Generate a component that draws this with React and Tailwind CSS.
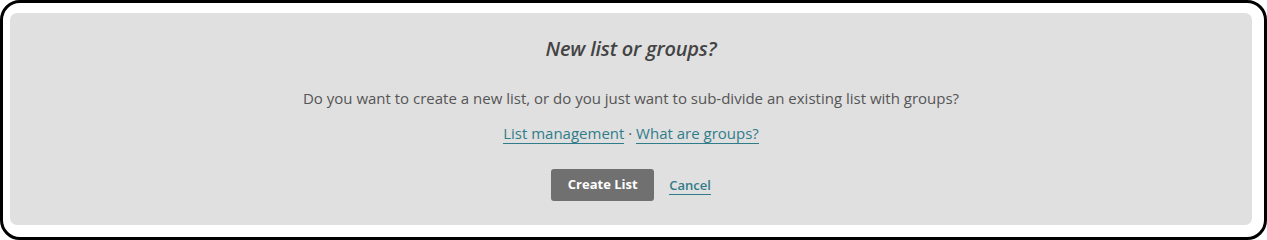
export default function App() {
  return (
    <div className="w-[1267px] h-[240px] bg-white">
      <div className="w-full h-full border-[3px] border-black rounded-[20px] pl-[7px] pt-[10px] pr-[12px] pb-[12px]">
        <div
          className="w-full h-full bg-[#e0e0e0] rounded-[7px] flex flex-col items-center pt-[22px] text-[#555]"
          style={{ fontFamily: '"Open Sans", sans-serif' }}
        >
          <h2 className="text-[20px] leading-[28px] italic font-semibold text-[#444] tracking-[-0.2px]">
            New list or groups?
          </h2>
          <p className="mt-[24px] text-[15px] leading-[22px] text-[#555]">
            Do you want to create a new list, or do you just want to sub-divide an existing list with groups?
          </p>
          <p className="mt-[13px] text-[15px] leading-[22px] text-[#555]">
            <a href="#" className="text-[#317c8a] border-b border-[#317c8a]">List management</a>
            <span> · </span>
            <a href="#" className="text-[#317c8a] border-b border-[#317c8a]">What are groups?</a>
          </p>
          <div className="mt-[25px] flex items-center gap-[15px]">
            <button className="w-[103px] h-[32px] bg-[#707070] rounded-[3px] text-white text-[13px] font-bold">
              Create List
            </button>
            <a href="#" className="text-[13px] font-semibold text-[#317c8a] border-b border-[#317c8a] leading-[18px]">
              Cancel
            </a>
          </div>
        </div>
      </div>
    </div>
  );
}
